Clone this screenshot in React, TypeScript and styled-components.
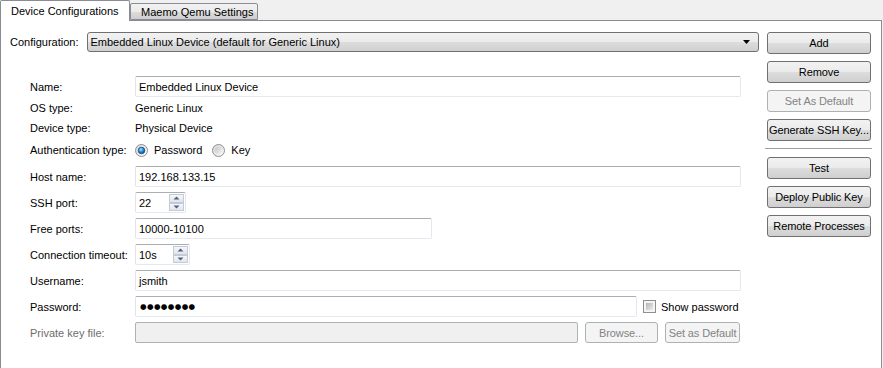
import React from "react";
import styled, { createGlobalStyle } from "styled-components";

const Global = createGlobalStyle`
  html, body { margin: 0; padding: 0; background: #f0f0f0; }
  body { font-family: "Liberation Sans", Arial, sans-serif; font-size: 11px; color: #000; }
  * { box-sizing: border-box; }
`;

const Window = styled.div`
  width: 883px;
  height: 368px;
  overflow: hidden;
  background: #f0f0f0;
`;

const TabBar = styled.div`
  display: flex;
  align-items: flex-end;
  height: 20px;
  position: relative;
  z-index: 2;
`;

const Tab = styled.div<{ $active?: boolean; $w: number }>`
  width: ${(p) => p.$w}px;
  height: ${(p) => (p.$active ? 21 : 17)}px;
  margin-bottom: ${(p) => (p.$active ? -1 : 0)}px;
  border: 1px solid #898c95;
  border-bottom: ${(p) => (p.$active ? "none" : "1px solid #898c95")};
  border-radius: 2px 2px 0 0;
  background: ${(p) =>
    p.$active ? "#ffffff" : "linear-gradient(#f2f2f2 0%, #ebebeb 50%, #dddddd 51%, #cfcfcf 100%)"};
  padding-left: 10px;
  display: flex;
  align-items: center;
  padding-bottom: ${(p) => (p.$active ? 1 : 0)}px;
  white-space: nowrap;
`;

const Pane = styled.div`
  position: relative;
  z-index: 1;
  width: 882px;
  height: 360px;
  background: #ffffff;
  border: 1px solid #898c95;
  padding: 11px 10px 0 9px;
  display: flex;
  gap: 8px;
`;

const LeftColumn = styled.div`
  flex: 1;
  display: flex;
  flex-direction: column;
`;

const RightColumn = styled.div`
  width: 104px;
  display: flex;
  flex-direction: column;
  gap: 7px;
`;

const ConfigRow = styled.div`
  display: flex;
  align-items: center;
  gap: 8px;
  height: 20px;
`;

const Combo = styled.div`
  flex: 1;
  height: 20px;
  border: 1px solid #707070;
  border-radius: 3px;
  background: linear-gradient(#f2f2f2 0%, #ebebeb 50%, #dddddd 51%, #cfcfcf 100%);
  display: flex;
  align-items: center;
  justify-content: space-between;
  padding: 0 8px 0 3px;
`;

const Form = styled.div`
  margin-top: 24px;
  padding: 0 18px 0 20px;
  display: flex;
  flex-direction: column;
`;

const Row = styled.div<{ $h: number; $mt: number }>`
  display: grid;
  grid-template-columns: 105px 1fr;
  align-items: center;
  height: ${(p) => p.$h}px;
  margin-top: ${(p) => p.$mt}px;
`;

const Label = styled.div<{ $disabled?: boolean }>`
  color: ${(p) => (p.$disabled ? "#6d6d6d" : "#000")};
  white-space: nowrap;
`;

const Fields = styled.div`
  display: flex;
  align-items: center;
  height: 100%;
`;

const TextField = styled.div<{ $w?: number; $disabled?: boolean }>`
  ${(p) => (p.$w ? `width: ${p.$w}px;` : "flex: 1;")}
  height: 21px;
  border: 1px solid ${(p) => (p.$disabled ? "#adb2b5" : "#e3e9ef")};
  border-top-color: ${(p) => (p.$disabled ? "#adb2b5" : "#abadb3")};
  border-left-color: ${(p) => (p.$disabled ? "#adb2b5" : "#e2e3ea")};
  border-radius: 2px;
  background: ${(p) => (p.$disabled ? "#f0f0f0" : "#ffffff")};
  display: flex;
  align-items: center;
  padding-left: 3px;
  white-space: nowrap;
`;

const Dots = styled.span`
  font-family: "DejaVu Sans", sans-serif;
  font-size: 7.5px;
  letter-spacing: 0.4px;
  padding-left: 1px;
`;

const SpinBox = styled.div<{ $w: number }>`
  width: ${(p) => p.$w}px;
  height: 21px;
  border: 1px solid #e3e9ef;
  border-top-color: #abadb3;
  border-left-color: #e2e3ea;
  border-radius: 2px;
  background: #fff;
  display: flex;
  align-items: center;
  padding: 1px 1px 1px 3px;
`;

const SpinText = styled.div`
  flex: 1;
`;

const SpinButtons = styled.div`
  width: 15px;
  height: 100%;
  display: flex;
  flex-direction: column;
`;

const SpinBtn = styled.div`
  flex: 1;
  border: 1px solid #c6cbd3;
  background: linear-gradient(#f5f7fa, #dfe5ec);
  display: flex;
  align-items: center;
  justify-content: center;
`;

const Radio = styled.label`
  display: flex;
  align-items: center;
  gap: 6px;
  margin-right: 10px;
`;

const Check = styled.label`
  display: flex;
  align-items: center;
  gap: 5px;
  margin-left: 6px;
  white-space: nowrap;
`;

const Button = styled.div<{ $disabled?: boolean; $w?: number }>`
  ${(p) => (p.$w ? `width: ${p.$w}px;` : "")}
  height: 22px;
  border: 1px solid ${(p) => (p.$disabled ? "#adb2b5" : "#707070")};
  border-radius: 3px;
  background: ${(p) =>
    p.$disabled ? "#f4f4f4" : "linear-gradient(#f2f2f2 0%, #ebebeb 50%, #dddddd 51%, #cfcfcf 100%)"};
  color: ${(p) => (p.$disabled ? "#838383" : "#000")};
  display: flex;
  align-items: center;
  justify-content: center;
  white-space: nowrap;
  flex-shrink: 0;
  letter-spacing: -0.1px;
`;

const SmallButton = styled(Button)`
  margin-left: 7px;
  height: 21px;
`;

const Separator = styled.div`
  height: 2px;
  border-top: 1px solid #a0a0a0;
  border-bottom: 1px solid #ffffff;
  margin: 0 -1px 0 -2px;
`;

const ComboArrow = () => (
  <svg width="7" height="4" viewBox="0 0 7 4">
    <path d="M0 0 H7 L3.5 4 Z" fill="#000" />
  </svg>
);

const Arrow = ({ up }: { up?: boolean }) => (
  <svg width="7" height="4" viewBox="0 0 7 4">
    <path d={up ? "M0.5 3.5 H6.5 L3.5 0.5 Z" : "M0.5 0.5 H6.5 L3.5 3.5 Z"} fill="#4d6185" />
  </svg>
);

const RadioIcon = ({ checked }: { checked?: boolean }) => (
  <svg width="13" height="13" viewBox="0 0 13 13">
    <defs>
      <linearGradient id="rOuter" x1="0" y1="0" x2="1" y2="1">
        <stop offset="0" stopColor="#d6d6d6" />
        <stop offset="1" stopColor="#fdfdfd" />
      </linearGradient>
      <radialGradient id="rOn" cx="0.4" cy="0.35" r="0.7">
        <stop offset="0" stopColor="#a7e3ff" />
        <stop offset="0.5" stopColor="#2a8fd6" />
        <stop offset="1" stopColor="#0f3f6e" />
      </radialGradient>
      <linearGradient id="rOff" x1="0" y1="0" x2="1" y2="1">
        <stop offset="0" stopColor="#c6c6c6" />
        <stop offset="1" stopColor="#f4f4f4" />
      </linearGradient>
    </defs>
    <circle cx="6.5" cy="6.5" r="6" fill="url(#rOuter)" stroke="#8e8f8f" strokeWidth="1" />
    {checked ? (
      <circle cx="6.5" cy="6.5" r="3.3" fill="url(#rOn)" stroke="#1c4f7c" strokeWidth="0.8" />
    ) : (
      <circle cx="6.5" cy="6.5" r="3.8" fill="url(#rOff)" />
    )}
  </svg>
);

const CheckIcon = () => (
  <svg width="13" height="13" viewBox="0 0 13 13">
    <defs>
      <linearGradient id="cIn" x1="0" y1="0" x2="1" y2="1">
        <stop offset="0" stopColor="#b0b4ba" />
        <stop offset="1" stopColor="#ececed" />
      </linearGradient>
    </defs>
    <rect x="0.5" y="0.5" width="12" height="12" fill="#f4f4f4" stroke="#8f8f8f" />
    <rect x="3" y="3" width="7" height="7" fill="url(#cIn)" />
  </svg>
);

export default function App() {
  return (
    <Window>
      <Global />
      <TabBar>
        <Tab $active $w={130}>Device Configurations</Tab>
        <Tab $w={128}>Maemo Qemu Settings</Tab>
      </TabBar>
      <Pane>
        <LeftColumn>
          <ConfigRow>
            <Label>Configuration:</Label>
            <Combo>
              <span>Embedded Linux Device (default for Generic Linux)</span>
              <ComboArrow />
            </Combo>
          </ConfigRow>
          <Form>
            <Row $h={21} $mt={0}>
              <Label>Name:</Label>
              <Fields>
                <TextField>Embedded Linux Device</TextField>
              </Fields>
            </Row>
            <Row $h={20} $mt={1}>
              <Label>OS type:</Label>
              <Fields>Generic Linux</Fields>
            </Row>
            <Row $h={20} $mt={0}>
              <Label>Device type:</Label>
              <Fields>Physical Device</Fields>
            </Row>
            <Row $h={20} $mt={2}>
              <Label>Authentication type:</Label>
              <Fields>
                <Radio>
                  <RadioIcon checked />
                  Password
                </Radio>
                <Radio>
                  <RadioIcon />
                  Key
                </Radio>
              </Fields>
            </Row>
            <Row $h={21} $mt={6}>
              <Label>Host name:</Label>
              <Fields>
                <TextField>192.168.133.15</TextField>
              </Fields>
            </Row>
            <Row $h={21} $mt={5}>
              <Label>SSH port:</Label>
              <Fields>
                <SpinBox $w={51}>
                  <SpinText>22</SpinText>
                  <SpinButtons>
                    <SpinBtn><Arrow up /></SpinBtn>
                    <SpinBtn><Arrow /></SpinBtn>
                  </SpinButtons>
                </SpinBox>
              </Fields>
            </Row>
            <Row $h={21} $mt={5}>
              <Label>Free ports:</Label>
              <Fields>
                <TextField $w={297}>10000-10100</TextField>
              </Fields>
            </Row>
            <Row $h={21} $mt={5}>
              <Label>Connection timeout:</Label>
              <Fields>
                <SpinBox $w={55}>
                  <SpinText>10s</SpinText>
                  <SpinButtons>
                    <SpinBtn><Arrow up /></SpinBtn>
                    <SpinBtn><Arrow /></SpinBtn>
                  </SpinButtons>
                </SpinBox>
              </Fields>
            </Row>
            <Row $h={21} $mt={5}>
              <Label>Username:</Label>
              <Fields>
                <TextField>jsmith</TextField>
              </Fields>
            </Row>
            <Row $h={21} $mt={5}>
              <Label>Password:</Label>
              <Fields>
                <TextField $w={502}>
                  <Dots>●●●●●●●●</Dots>
                </TextField>
                <Check>
                  <CheckIcon />
                  Show password
                </Check>
              </Fields>
            </Row>
            <Row $h={21} $mt={5}>
              <Label $disabled>Private key file:</Label>
              <Fields>
                <TextField $w={443} $disabled />
                <SmallButton $disabled $w={73}>Browse...</SmallButton>
                <SmallButton $disabled $w={75}>Set as Default</SmallButton>
              </Fields>
            </Row>
          </Form>
        </LeftColumn>
        <RightColumn>
          <Button>Add</Button>
          <Button>Remove</Button>
          <Button $disabled>Set As Default</Button>
          <Button>Generate SSH Key...</Button>
          <Separator />
          <Button>Test</Button>
          <Button>Deploy Public Key</Button>
          <Button>Remote Processes</Button>
        </RightColumn>
      </Pane>
    </Window>
  );
}
